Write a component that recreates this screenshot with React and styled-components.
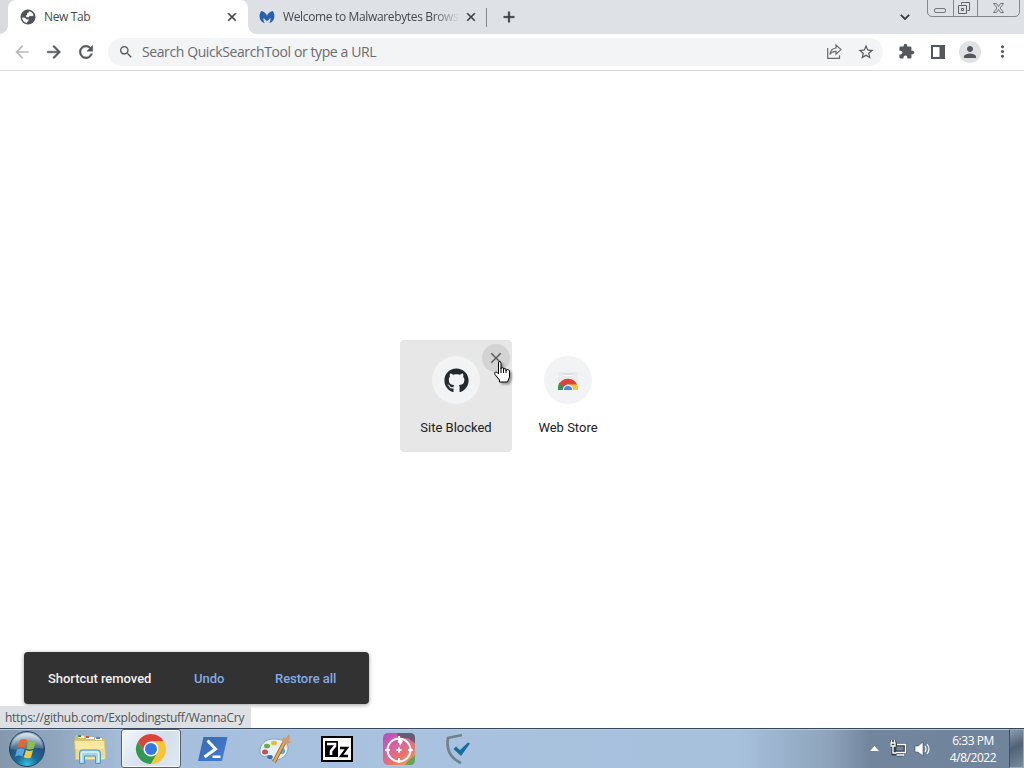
import React from 'react';
import styled, { createGlobalStyle, css } from 'styled-components';
import {
  MdClose, MdArrowBack, MdArrowForward, MdRefresh, MdSearch, MdStarBorder,
  MdExtension, MdPerson, MdMoreVert, MdAdd, MdKeyboardArrowDown,
} from 'react-icons/md';
import { FaGithub } from 'react-icons/fa';

const GlobalStyle = createGlobalStyle`
  * { box-sizing: border-box; }
  body { margin: 0; overflow: hidden; background: #fff; }
`;

const ui = css`font-family: "Open Sans", "Noto Sans", sans-serif;`;

// Thickens the drawn outline of an icon, leaving its transparent bounding path alone.
const heavy = (width) => css`
  svg path:not([fill="none"]) {
    stroke: currentColor;
    stroke-width: ${width}px;
  }
`;

const Screen = styled.div`
  position: relative;
  width: 1024px;
  height: 768px;
  display: flex;
  flex-direction: column;
  overflow: hidden;
  background: #fff;
  ${ui}
`;

const TabStrip = styled.div`
  height: 34px;
  flex: none;
  display: flex;
  align-items: stretch;
  background: linear-gradient(90deg, #d9dbdf 0, #dee1e6 300px);
`;

const Tab = styled.div`
  display: flex;
  align-items: center;
  width: ${(p) => p.$width}px;
  padding: 0 ${(p) => p.$padRight}px 0 ${(p) => p.$padLeft}px;
  color: #45494d;
  background: ${(p) => (p.$active ? '#fff' : 'transparent')};
  border-radius: 8px 8px 0 0;
  svg { flex: none; }
`;

const TabFoot = styled.div`
  align-self: flex-end;
  flex: none;
  width: 8px;
  height: 8px;
  background: radial-gradient(circle at ${(p) => (p.$right ? '100% 0' : '0 0')}, transparent 7.5px, #fff 8px);
`;

const TabTitle = styled.span`
  flex: 1;
  min-width: 0;
  margin-left: ${(p) => p.$gap}px;
  font-size: 12px;
  line-height: 16px;
  letter-spacing: -0.35px;
  white-space: nowrap;
  overflow: hidden;
  ${(p) => p.$fade && css`
    mask-image: linear-gradient(90deg, #000 150px, transparent 177px);
  `}
`;

const BoldIcon = styled.span`
  display: flex;
  color: #3c4043;
  ${heavy(0.9)}
`;

const Divider = styled.i`
  align-self: center;
  width: 1px;
  height: 19px;
  background: #85898e;
`;

const StripButton = styled.span`
  display: flex;
  align-items: center;
  justify-content: center;
  width: 28px;
  color: #33373b;
  margin-left: ${(p) => p.$left || 0};
  ${heavy(0.6)}
`;

const WindowButtons = styled.div`
  display: flex;
  width: 93px;
  height: 18px;
  margin: -1px 4px 0 8px;
  border: 1px solid #85888e;
  border-radius: 0 0 5px 5px;
`;

const WindowButton = styled.span`
  display: flex;
  align-items: center;
  justify-content: center;
  width: ${(p) => p.$width}px;
  border-left: ${(p) => (p.$first ? 'none' : '1px solid #85888e')};
`;

const Toolbar = styled.div`
  height: 37px;
  flex: none;
  display: flex;
  align-items: center;
  padding: 0 8px 1px 8px;
  border-bottom: 1px solid #dcdcdd;
  color: #54585c;
`;

const ToolButton = styled.span`
  display: flex;
  align-items: center;
  justify-content: center;
  flex: none;
  width: 28px;
  height: 28px;
  margin-right: ${(p) => p.$gap ?? 4}px;
  color: ${(p) => (p.$muted ? '#b8babd' : 'inherit')};
  ${(p) => p.$bold && heavy(0.6)}
`;

const Omnibox = styled.div`
  display: flex;
  align-items: center;
  flex: none;
  width: 775px;
  height: 28px;
  margin: 0 9px 0 8px;
  padding: 0 3px 0 10px;
  border-radius: 14px;
  background: #f2f4f5;
`;

const OmniText = styled.span`
  flex: 1;
  margin-left: 8px;
  font-size: 14px;
  letter-spacing: -0.4px;
  line-height: 20px;
  color: #696d71;
  white-space: nowrap;
`;

const Avatar = styled.span`
  display: flex;
  align-items: center;
  justify-content: center;
  width: 22px;
  height: 22px;
  border-radius: 50%;
  background: #dfe1e5;
`;

const Page = styled.main`
  flex: 1;
  display: flex;
  justify-content: center;
  align-items: flex-start;
  padding-top: 269px;
`;

const Tile = styled.div`
  position: relative;
  width: 112px;
  height: 112px;
  padding-top: 16px;
  display: flex;
  flex-direction: column;
  align-items: center;
  border-radius: 4px;
  background: ${(p) => (p.$hover ? '#e7e7e7' : 'transparent')};
`;

const TileIcon = styled.span`
  display: flex;
  align-items: center;
  justify-content: center;
  width: 48px;
  height: 48px;
  border-radius: 50%;
  background: #f1f3f4;
  color: #24292e;
`;

const TileLabel = styled.span`
  margin-top: 14px;
  font: 13px/20px Roboto, sans-serif;
  color: #202124;
`;

const RemoveBadge = styled.span`
  position: absolute;
  top: 4px;
  right: 2px;
  width: 28px;
  height: 28px;
  display: flex;
  align-items: center;
  justify-content: center;
  border-radius: 50%;
  background: #d3d3d3;
  color: #5b5b5b;
`;

const Pointer = styled.svg`
  position: absolute;
  left: 494px;
  top: 361px;
  filter: drop-shadow(2px 2px 1px rgba(0, 0, 0, 0.35));
`;

const Toast = styled.div`
  position: absolute;
  left: 24px;
  top: 652px;
  width: 345px;
  height: 52px;
  display: flex;
  align-items: center;
  padding: 2px 0 0 24px;
  border-radius: 4px;
  background: #323232;
  box-shadow: 0 1px 4px rgba(0, 0, 0, 0.38);
  font: 500 13px/20px Roboto, sans-serif;
  letter-spacing: -0.04px;
  white-space: nowrap;
`;

const ToastMessage = styled.span`
  width: 146px;
  color: #f0f0f0;
`;

const ToastAction = styled.span`
  width: ${(p) => p.$width}px;
  color: #82ace6;
`;

const StatusBubble = styled.div`
  position: absolute;
  left: 0;
  top: 706px;
  width: 251px;
  height: 22px;
  padding-left: 5px;
  background: #dee1e4;
  color: #50555a;
  font-size: 12px;
  line-height: 24px;
  letter-spacing: -0.275px;
  white-space: nowrap;
`;

const Taskbar = styled.footer`
  height: 40px;
  flex: none;
  display: flex;
  border-top: 1px solid #34475e;
  box-shadow: inset 0 1px #b9cce0;
  background: linear-gradient(90deg, #8498ad 0, #91a7bf 60px, #a5bedb 125px, #a8c2df 400px, #a7c0dc 740px, #8da3bb 830px, #71869d 870px, #70849b 1024px);
`;

const TaskItem = styled.span`
  display: flex;
  align-items: center;
  justify-content: center;
  width: ${(p) => p.$width || 62}px;
  padding-left: ${(p) => p.$shift || 0}px;
  ${(p) => p.$active && css`
    height: 39px;
    border: 1px solid #4f6177;
    border-radius: 3px;
    background: linear-gradient(125deg, #f3f7fa, #d3dfeb 55%, #dfe9f2);
    box-shadow: inset 0 0 0 1px #f8fbfe;
  `}
`;

const Tray = styled.div`
  display: flex;
  align-items: center;
  margin-left: auto;
`;

const TrayIcon = styled.span`
  display: flex;
  justify-content: center;
  width: 24px;
`;

const Clock = styled.div`
  width: 75px;
  padding-left: 3px;
  text-align: center;
  color: #fff;
  font-size: 12px;
  line-height: 17px;
  letter-spacing: -0.45px;
`;

const ShowDesktop = styled.span`
  width: 15px;
  height: 39px;
  border: 1px solid #9aabba;
  border-left-color: #3f5165;
  background: linear-gradient(155deg, #8c9bac, #526275 45%, #77899c);
`;

const GlobeIcon = () => (
  <svg width="16" height="16" viewBox="0 0 16 16">
    <circle cx="8" cy="8" r="7.500" fill="#505357" />
    <path fill="#fff" d="M9.500 2.300c2 .5 3.500 2 4.100 4L12 7.200l-2.200-.4-1 1.400-2.500-.1L5.800 6.700l1.400-1-.1-1.500 1.500-.6Z" />
    <path fill="#fff" d="M2 8.500 5 8.800l1.600 1.400 2.200.2-.5 1.800-1.300.5.2 1.400C4.300 13.700 2.200 11.400 2 8.500Z" />
  </svg>
);

const Malwarebytes = () => (
  <svg width="16" height="16" viewBox="0 0 16 16">
    <path fill="#2860b4" d="M2.300 2C.2 4.600 0 9 2 11.700c1 1.300 2.300 2 3.800 2.300C4.600 12.400 4.200 10.800 4.500 9L8 12.200 11.500 9c.3 1.800-.1 3.400-1.300 5 1.500-.3 2.800-1 3.800-2.300C16 9 15.800 4.600 13.700 2 11.400 2.400 9.200 3.900 8 6.400 6.800 3.900 4.600 2.400 2.300 2Z" />
  </svg>
);

const ShareIcon = () => (
  <svg width="17" height="17" viewBox="0 0 17 17" fill="none" stroke="#666a6e" strokeWidth="1.2">
    <path d="M1.700 5v10.300h11.800v-3M10 5V2l5 4.600-5 4.600V8.300c-3 0-4.900 1-6 3.200C4.400 7.800 6.400 5.400 10 5Z" />
  </svg>
);

const SidePanelIcon = () => (
  <svg width="16" height="16" viewBox="0 0 16 16">
    <path fill="#54585c" fillRule="evenodd" d="M1 1h14v14H1zM3 3v10h6.500V3z" />
  </svg>
);

const WebStoreIcon = () => (
  <svg width="24" height="24" viewBox="0 0 24 24">
    <path fill="#e9eced" d="M2 4h20v18H2z" />
    <path fill="#dfe3e4" d="M7 5h10v2H7z" />
    <path fill="#f4f6f6" d="M7 7h10v1H7z" />
    <path fill="#2f9953" d="M3.500 14.500A10 10 0 0 0 2 22h5.500l1-4Z" />
    <path fill="#f6c62d" d="M13 16h8a10 10 0 0 1 1 6h-6Z" />
    <path fill="#dc4437" d="M3.400 15.500A10 10 0 0 1 21 16.500h-9a5 5 0 0 0-4.500 3Z" />
    <path fill="#f4f6f6" d="M6.800 22a5.200 5.200 0 0 1 10.400 0Z" />
    <path fill="#4285f4" d="M8 22a4 4 0 0 1 8 0Z" />
  </svg>
);

const StartOrb = () => (
  <svg width="38" height="38" viewBox="0 0 38 38">
    <defs>
      <radialGradient id="orb" cx=".5" cy=".95" r=".85">
        <stop stopColor="#36c3dc" /><stop offset=".35" stopColor="#1c6c9b" /><stop offset=".75" stopColor="#265078" /><stop offset="1" stopColor="#8ba8bf" />
      </radialGradient>
      <linearGradient id="orbGloss" x2="0" y2="1"><stop stopColor="#fff" stopOpacity=".65" /><stop offset="1" stopColor="#fff" stopOpacity=".12" /></linearGradient>
    </defs>
    <circle cx="19" cy="19" r="17.500" fill="url(#orb)" stroke="#24445e" />
    <path d="M3 19a16 16 0 0 1 32 0c-9-4-19 4-32 0Z" fill="url(#orbGloss)" />
    <path fill="#e66531" d="M12 10c3-1.500 5-1 7 0l-2 8c-3-1.600-5-1.300-7.500 0Z" />
    <path fill="#8cc04a" d="M20.500 10.700c3 1.500 5 1 7.500 0l-2.500 8c-2.500 1.200-4.500 1-7-.2Z" />
    <path fill="#56a7df" d="M9 19.500c3-1.300 5-1.300 7.500 0l-2 7c-3-1.400-5-1.200-7.500.2Z" />
    <path fill="#fbc63b" d="M18 20c2.500 1.200 4.500 1.200 7 .2l-2.200 7.500c-2.600 1-4.600.8-7-.5Z" />
  </svg>
);

const ExplorerIcon = () => (
  <svg width="34" height="32" viewBox="0 0 34 32">
    <path fill="#ddbd63" d="M2 4l1-2h8l2 2h6l1 1h10l2 3v19H2Z" />
    <path fill="#fff" d="M5 3h6v2H5zM13 4h8v2h-8zM22 5h7v2h-7z" />
    <path fill="#39a14a" d="M5 2h3v2H5z" /><path fill="#d75332" d="M13 3h3v2h-3z" /><path fill="#4e91ca" d="M23 4h4v2h-4z" />
    <path fill="#f8e99d" stroke="#dbc574" d="M1.500 7.500h30l1 18-2 1H3Z" />
    <path fill="#f1db80" d="M3 16h29l-1 9H3Z" />
    <path fill="#9fd5ef" stroke="#5298c5" d="M6.500 30.500V20q0-3 3-3h15q3 0 3 3v10.500h-5V23h-11v7.500Z" />
    <path stroke="#d9f3fd" strokeWidth="1.500" fill="none" d="M8.500 29v-8q0-2 2-2h13q2 0 2 2v8" />
  </svg>
);

const ChromeIcon = () => (
  <svg width="32" height="32" viewBox="0 0 32 32">
    <path fill="#dc4437" d="M3 8.500A15 15 0 0 1 29 8.500H16l-6.500 11.250Z" />
    <path fill="#2f9953" d="M3 8.500 9.500 19.750 22.500 19.750 16 31A15 15 0 0 1 3 8.500Z" />
    <path fill="#fbc62d" d="M16 31 22.500 19.750 22 11 16 8.500h13A15 15 0 0 1 16 31Z" />
    <circle cx="16" cy="16" r="7.500" fill="#fff" /><circle cx="16" cy="16" r="6" fill="#3478e5" />
  </svg>
);

const PowerShellIcon = () => (
  <svg width="32" height="28" viewBox="0 0 32 28">
    <defs><linearGradient id="ps" x2="1" y2="1"><stop stopColor="#3768af" /><stop offset="1" stopColor="#437ed8" /></linearGradient></defs>
    <path fill="url(#ps)" d="M6.500 2h24L25 26H1Z" />
    <path fill="none" stroke="#fff" strokeWidth="3" d="m10.500 5.500 8 8.500-11 8" />
    <path fill="#fff" d="M15.500 20.500h8v2.500h-8z" />
  </svg>
);

const PaintIcon = () => (
  <svg width="34" height="32" viewBox="0 0 34 32">
    <path fill="#e5f0f7" stroke="#7da5bf" d="M17 6C8 5 1 12 2 19c.5 4 4 5 7 4 2-.5 3 1 4 3 4 4 16-1 17-10 .5-6-5-10-13-10Z" />
    <ellipse cx="7" cy="19" rx="3" ry="2.500" fill="#d04b48" /><ellipse cx="9" cy="13" rx="3" ry="2.300" fill="#6bae3a" />
    <ellipse cx="16" cy="10" rx="3" ry="2.300" fill="#e9bb35" /><ellipse cx="12" cy="24" rx="2.800" ry="2" fill="#356fb1" />
    <ellipse cx="24" cy="18" rx="3" ry="3" fill="#56a8c7" />
    <path stroke="#97642d" strokeWidth="4" d="m16 29 10-19" /><path stroke="#eaa64e" strokeWidth="2.500" d="m16 29 10-19" />
    <path fill="#d39b68" d="m24 9 1-5 3 1 3-4 1 4-1 3 3 1-7 3Z" />
  </svg>
);

const SevenZipIcon = () => (
  <svg width="32" height="26" viewBox="0 0 32 26">
    <path d="M0 0h32v26H0z" /><path fill="#fff" d="M2 2h28v22H2z" />
    <path d="M4 5h13v16H4z" /><path fill="none" stroke="#fff" strokeWidth="2.600" d="M6 8h8v2l-4 5v4" />
    <path fill="none" stroke="#000" strokeWidth="2.300" d="M19 12h7l-6 8h7" />
  </svg>
);

const ScopeIcon = () => (
  <svg width="32" height="32" viewBox="0 0 32 32">
    <defs><linearGradient id="scope" x2=".7" y2="1"><stop stopColor="#b64bc5" /><stop offset=".45" stopColor="#d765a0" /><stop offset=".75" stopColor="#e8736b" /><stop offset="1" stopColor="#e99b57" /></linearGradient></defs>
    <rect width="32" height="32" rx="5" fill="url(#scope)" />
    <path fill="#655d70" d="M14 0h13q5 0 5 5v5l-7-5-10 1Z" />
    <path fill="#61a65c" d="m26 27 6-5v5q0 5-5 5h-5Z" />
    <circle cx="16" cy="17" r="11.500" fill="none" stroke="#fff" strokeWidth="2" />
    <path stroke="#fff" strokeWidth="2" d="M16 3v7M16 25v5M2 17h5M25 17h5M13.500 17h5M16 14.500v5" />
    <path fill="#fff" d="m15 4 5 4-3 5Z" />
  </svg>
);

const ShieldIcon = () => (
  <svg width="26" height="32" viewBox="0 0 26 32" fill="none">
    <path stroke="#71818d" strokeWidth="2.700" d="M17 2C12 3 7 4 3 5c-2 12 2 20 13 25" />
    <path fill="#176f9e" d="m8.500 16 2.500-2.500 4 3.500 8-7.500 2 1L16 23Z" />
  </svg>
);

export default function App() {
  return (
    <Screen>
      <GlobalStyle />
      <TabStrip>
        <TabFoot />
        <Tab $active $width={240} $padLeft={12} $padRight={9}>
          <GlobeIcon />
          <TabTitle $gap={8}>New Tab</TabTitle>
          <BoldIcon><MdClose size={14} /></BoldIcon>
        </Tab>
        <TabFoot $right />
        <Tab $width={230} $padLeft={3} $padRight={8}>
          <Malwarebytes />
          <TabTitle $gap={8} $fade>Welcome to Malwarebytes Brows</TabTitle>
          <BoldIcon><MdClose size={14} /></BoldIcon>
        </Tab>
        <Divider />
        <StripButton $left="8px"><MdAdd size={18} /></StripButton>
        <StripButton $left="auto"><MdKeyboardArrowDown size={18} /></StripButton>
        <WindowButtons>
          <WindowButton $width={25} $first>
            <svg width="13" height="16" fill="none" stroke="#74777c"><rect x=".5" y="8.500" width="11" height="4" rx="1.500" /></svg>
          </WindowButton>
          <WindowButton $width={25}>
            <svg width="15" height="16" viewBox="1 0 15 16" fill="none" stroke="#606368"><path d="M4.500 4.500v-2h8v8h-2M1.500 5.500h8v8h-8ZM4.500 8.500h2v2h-2Z" /></svg>
          </WindowButton>
          <WindowButton $width={42}>
            <svg width="13" height="14" fill="none" stroke="#74777c"><path d="M1.500 2.500h3l2 3 2-3h3L8 7l3.500 4.500h-3l-2-3-2 3h-3L5 7Z" /></svg>
          </WindowButton>
        </WindowButtons>
      </TabStrip>
      <Toolbar>
        <ToolButton $muted><MdArrowBack size={20} /></ToolButton>
        <ToolButton $bold><MdArrowForward size={20} /></ToolButton>
        <ToolButton $gap={0} $bold><MdRefresh size={20} /></ToolButton>
        <Omnibox>
          <MdSearch size={16} />
          <OmniText>Search QuickSearchTool or type a URL</OmniText>
          <ToolButton><ShareIcon /></ToolButton>
          <ToolButton $gap={0}><MdStarBorder size={18} /></ToolButton>
        </Omnibox>
        <ToolButton><MdExtension size={17} /></ToolButton>
        <ToolButton><SidePanelIcon /></ToolButton>
        <ToolButton><Avatar><MdPerson size={18} /></Avatar></ToolButton>
        <ToolButton $gap={0}><MdMoreVert size={19} /></ToolButton>
      </Toolbar>
      <Page>
        <Tile $hover>
          <TileIcon><FaGithub size={25} /></TileIcon>
          <TileLabel>Site Blocked</TileLabel>
          <RemoveBadge><MdClose size={18} /></RemoveBadge>
        </Tile>
        <Tile>
          <TileIcon><WebStoreIcon /></TileIcon>
          <TileLabel>Web Store</TileLabel>
        </Tile>
      </Page>
      <Taskbar>
        <TaskItem $width={53}><StartOrb /></TaskItem>
        <TaskItem $width={68} $shift={5}><ExplorerIcon /></TaskItem>
        <TaskItem $width={60} $active><ChromeIcon /></TaskItem>
        <TaskItem $width={63}><PowerShellIcon /></TaskItem>
        <TaskItem><PaintIcon /></TaskItem>
        <TaskItem><SevenZipIcon /></TaskItem>
        <TaskItem><ScopeIcon /></TaskItem>
        <TaskItem $width={56}><ShieldIcon /></TaskItem>
        <Tray>
          <TrayIcon><svg width="9" height="5" viewBox="0 0 9 5"><path d="m0 5 4.500-5L9 5Z" fill="#fff" /></svg></TrayIcon>
          <TrayIcon>
            <svg width="17" height="17" viewBox="0 0 17 17" fill="none" stroke="#34404e" strokeWidth="3">
              <path d="M5 5h10v7H5zM3 6v8h3M7 15h6M1 3h4v3H1zM1.500 0v3M4.500 0v3" />
              <path stroke="#fff" strokeWidth="1.300" d="M7 4.500h8.500v8H6M3 6v7h3M7 15h7M1 3h4v3H1zM1.500 0v3M4.500 0v3" />
            </svg>
          </TrayIcon>
          <TrayIcon>
            <svg width="17" height="16" viewBox="0 0 17 16"><path fill="#fff" stroke="#3b4958" strokeWidth=".6" d="M1 5h3l5-4v14l-5-4H1Z" /><path fill="none" stroke="#fff" strokeWidth="1.100" d="M11 5q2 3 0 6M13 3q4 5 0 10" /></svg>
          </TrayIcon>
          <Clock>6:33 PM<br />4/8/2022</Clock>
          <ShowDesktop />
        </Tray>
      </Taskbar>
      <Toast>
        <ToastMessage>Shortcut removed</ToastMessage>
        <ToastAction $width={81}>Undo</ToastAction>
        <ToastAction $width={70}>Restore all</ToastAction>
      </Toast>
      <StatusBubble>https://github.com/Explodingstuff/WannaCry</StatusBubble>
      <Pointer width="17" height="23" viewBox="0 0 17 23">
        <path fill="#fff" stroke="#000" strokeWidth="1" d="M4.500 13V2q0-1.500 1.200-1.500T7 2v6q0-1.500 1.300-1.500T9.500 8v1q0-1.500 1.300-1.500T12 9v1q0-1.500 1.500-1.500T15.500 10v6l-2 5h-8v-2L1 13.500Q0 11.500 1.500 11T4.500 13M7 8v4M9.500 9v3M12 10v2" />
      </Pointer>
    </Screen>
  );
}
